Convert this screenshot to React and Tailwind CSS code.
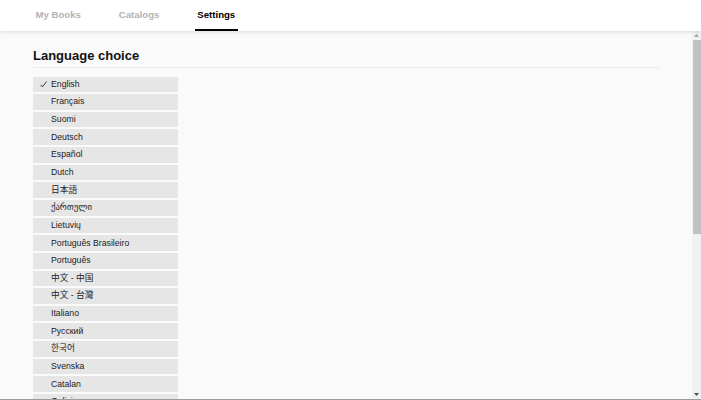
import React from "react";

const langs = [
  "English",
  "Français",
  "Suomi",
  "Deutsch",
  "Español",
  "Dutch",
  "日本語",
  "ქართული",
  "Lietuvių",
  "Português Brasileiro",
  "Português",
  "中文 - 中国",
  "中文 - 台灣",
  "Italiano",
  "Русский",
  "한국어",
  "Svenska",
  "Catalan",
  "Galician",
  "Euskadi",
];

const font = {
  fontFamily:
    '"Liberation Sans", Arial, "Noto Sans CJK JP", "Noto Sans CJK KR", "DejaVu Sans", sans-serif',
};

function Check() {
  return (
    <svg
      width="7"
      height="7"
      viewBox="0 0 7 7"
      className="absolute left-[7px] top-[4.5px]"
    >
      <path d="M0.5 3.8 L2.4 5.9 L6.5 0.6" fill="none" stroke="#222" strokeWidth="0.9" />
    </svg>
  );
}

function Scrollbar() {
  return (
    <div className="flex w-[9px] shrink-0 flex-col bg-[#f1f1f1]">
      <div className="flex h-[9px] items-center justify-center">
        <svg width="5" height="3" viewBox="0 0 5 3">
          <path d="M0 3 L2.5 0 L5 3 Z" fill="#a3a3a3" />
        </svg>
      </div>
      <div className="flex-1">
        <div className="ml-[1px] h-[194px] bg-[#c1c1c1]" />
      </div>
      <div className="flex h-[9px] items-center justify-center">
        <svg width="5" height="3" viewBox="0 0 5 3">
          <path d="M0 0 L2.5 3 L5 0 Z" fill="#505050" />
        </svg>
      </div>
    </div>
  );
}

export default function App() {
  return (
    <div
      className="flex h-[400px] w-full flex-col overflow-hidden border-b border-[#9c9c9c] bg-[#fafafa]"
      style={font}
    >
      <header className="relative z-10 flex h-[31px] shrink-0 items-stretch gap-[33px] bg-white pl-[33px] shadow-[0_1px_4px_rgba(0,0,0,0.12)]">
        <div className="flex items-center px-[2.5px] text-[9.6px] font-bold text-[#b3b3b3]">My Books</div>
        <div className="flex items-center px-[2.5px] text-[9.6px] font-bold text-[#b3b3b3]">Catalogs</div>
        <div className="flex items-center border-b-2 border-black px-[2.5px] pt-[2px] text-[9.6px] font-bold text-black">
          Settings
        </div>
      </header>
      <div className="flex min-h-0 flex-1">
        <main className="min-w-0 flex-1 overflow-hidden px-[33px] pt-[17px]">
          <h2 className="border-b border-[#ebebeb] pb-[4px] text-[13px] leading-[15px] font-bold text-[#111]">
            Language choice
          </h2>
          <ul className="mt-[8.5px] flex w-[145px] flex-col gap-[2px]">
            {langs.map((l, i) => (
              <li
                key={l}
                className="relative flex h-[15.65px] shrink-0 items-center bg-[#e6e6e6] pl-[18px] text-[8.7px] text-[#222]"
              >
                {i === 0 && <Check />}
                {l}
              </li>
            ))}
          </ul>
        </main>
        <Scrollbar />
      </div>
    </div>
  );
}
